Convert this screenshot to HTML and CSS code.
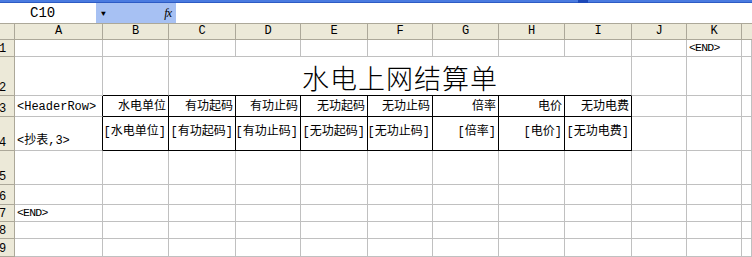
FILE: index.html
```html
<!DOCTYPE html>
<html lang="zh-CN">
<head>
	<meta charset="UTF-8">
	<title>水电上网结算单</title>
	<link rel="stylesheet" href="styles.css">
</head>
<body>
    <div class="topstrip"><span class="topicon"></span></div>
    <div class="fbar">
        <div class="namebox">C10</div>
        <div class="fbtn"><span class="arrow">&#9660;</span><span class="fx"><i>f</i>x</span></div>
        <div class="formula"></div>
    </div>
    <div class="sheet">
        <!-- 列标 -->
        <div class="ch corner"></div>
        <div class="ch">A</div><div class="ch">B</div><div class="ch">C</div><div class="ch">D</div>
        <div class="ch">E</div><div class="ch">F</div><div class="ch">G</div><div class="ch">H</div>
        <div class="ch">I</div><div class="ch">J</div><div class="ch">K</div><div class="ch last"></div>
        <!-- 1 -->
        <div class="rh">1</div>
        <div class="c"></div><div class="c"></div><div class="c"></div><div class="c"></div>
        <div class="c"></div><div class="c"></div><div class="c"></div><div class="c"></div>
        <div class="c"></div><div class="c"></div><div class="c tag">&lt;END&gt;</div><div class="c"></div>
        <!-- 2 -->
        <div class="rh">2</div>
        <div class="c"></div><div class="c bb"></div>
        <div class="c bb title">水电上网结算单</div>
        <div class="c"></div><div class="c"></div><div class="c"></div>
        <!-- 3 -->
        <div class="rh">3</div>
        <div class="c br">&lt;HeaderRow&gt;</div>
        <div class="c br bb r">水电单位</div><div class="c br bb r">有功起码</div><div class="c br bb r">有功止码</div><div class="c br bb r">无功起码</div>
        <div class="c br bb r">无功止码</div><div class="c br bb r">倍率</div><div class="c br bb r">电价</div><div class="c br bb r">无功电费</div>
        <div class="c"></div><div class="c"></div><div class="c"></div>
        <!-- 4 -->
        <div class="rh">4</div>
        <div class="c br">&lt;抄表,3&gt;</div>
        <div class="c br bb r m">[水电单位]</div><div class="c br bb r m">[有功起码]</div><div class="c br bb r m">[有功止码]</div><div class="c br bb r m">[无功起码]</div>
        <div class="c br bb r m">[无功止码]</div><div class="c br bb r m">[倍率]</div><div class="c br bb r m">[电价]</div><div class="c br bb r m">[无功电费]</div>
        <div class="c"></div><div class="c"></div><div class="c"></div>
        <!-- 5 -->
        <div class="rh">5</div>
        <div class="c"></div><div class="c"></div><div class="c"></div><div class="c"></div>
        <div class="c"></div><div class="c"></div><div class="c"></div><div class="c"></div>
        <div class="c"></div><div class="c"></div><div class="c"></div><div class="c"></div>
        <!-- 6 -->
        <div class="rh">6</div>
        <div class="c"></div><div class="c"></div><div class="c"></div><div class="c"></div>
        <div class="c"></div><div class="c"></div><div class="c"></div><div class="c"></div>
        <div class="c"></div><div class="c"></div><div class="c"></div><div class="c"></div>
        <!-- 7 -->
        <div class="rh">7</div>
        <div class="c tag">&lt;END&gt;</div><div class="c"></div><div class="c"></div><div class="c"></div>
        <div class="c"></div><div class="c"></div><div class="c"></div><div class="c"></div>
        <div class="c"></div><div class="c"></div><div class="c"></div><div class="c"></div>
        <!-- 8 -->
        <div class="rh">8</div>
        <div class="c"></div><div class="c"></div><div class="c"></div><div class="c"></div>
        <div class="c"></div><div class="c"></div><div class="c"></div><div class="c"></div>
        <div class="c"></div><div class="c"></div><div class="c"></div><div class="c"></div>
        <!-- 9 -->
        <div class="rh">9</div>
        <div class="c"></div><div class="c"></div><div class="c"></div><div class="c"></div>
        <div class="c"></div><div class="c"></div><div class="c"></div><div class="c"></div>
        <div class="c"></div><div class="c"></div><div class="c"></div><div class="c"></div>
    </div>
</body>
</html>
```

FILE: styles.css
```css
*{
    margin: 0;
    padding: 0;
    box-sizing: border-box;
}
html,body{width: 100%;height: 100%;overflow: hidden;background: #fff;}
body{
    font-family: "Liberation Mono", "Noto Sans CJK SC", monospace;
    font-size: 12px;
    color: #000;
}
.topstrip{
    height: 3px;
    background: #4a7be0;
    border-bottom: 1px solid #2d5bc4;
    position: relative;
}
.topicon{
    position: absolute;
    left: 578px;
    top: 0;
    width: 10px;
    height: 3px;
    background: #1c48b8;
}
.fbar{
    display: flex;
    height: 20px;
    background: #fff;
}
.namebox{
    width: 96px;
    padding-left: 30px;
    font-size: 14px;
    line-height: 20px;
    color: #000;
}
.fbtn{
    width: 80px;
    background: #a7c1f3;
    display: flex;
    align-items: center;
    justify-content: space-between;
    padding: 0 5px 0 5px;
}
.arrow{font-size: 8px;color: #000;}
.fx{
    font-family: "Liberation Serif", serif;
    font-size: 12px;
    font-style: italic;
    letter-spacing: -1px;
}
.fx i{font-style: italic;}
.formula{flex: 1;}
.sheet{
    display: grid;
    grid-template-columns: 15px 88px 66px 67px 65px 67px 65px 66px 66px 67px 55px 55px 1fr;
    grid-template-rows: 16px 17px 39px 21px 34px 34px 20px 17px 17px 18px;
    border-top: 1px solid #aca899;
}
.ch{
    background: #ece9d8;
    border-right: 1px solid #aca899;
    border-bottom: 1px solid #aca899;
    text-align: center;
    line-height: 15px;
    font-size: 12px;
}
.ch.last{border-right: none;}
.rh{
    background: #ece9d8;
    border-right: 1px solid #aca899;
    border-bottom: 1px solid #aca899;
    display: flex;
    align-items: flex-end;
    font-size: 12px;
    line-height: 13px;
    text-indent: -1px;
    overflow: hidden;
}
.c{
    border-right: 1px solid #c0c0c0;
    border-bottom: 1px solid #c0c0c0;
    display: flex;
    align-items: flex-end;
    padding: 0 2px 1px 2px;
    line-height: 15px;
    white-space: nowrap;
    overflow: hidden;
}
.c.r{justify-content: flex-end;}
.c.m{align-items: center;padding-bottom: 2px;}
.c.br{border-right-color: #000;}
.c.bb{border-bottom-color: #000;}
.tag{font-size: 11.5px;letter-spacing: -0.8px;}
.title{
    grid-column: span 7;
    justify-content: center;
    font-family: "Noto Sans CJK SC", sans-serif;
    font-weight: 300;
    font-size: 27px;
    line-height: 32px;
    letter-spacing: 1px;
    padding-bottom: 1px;
}
```
